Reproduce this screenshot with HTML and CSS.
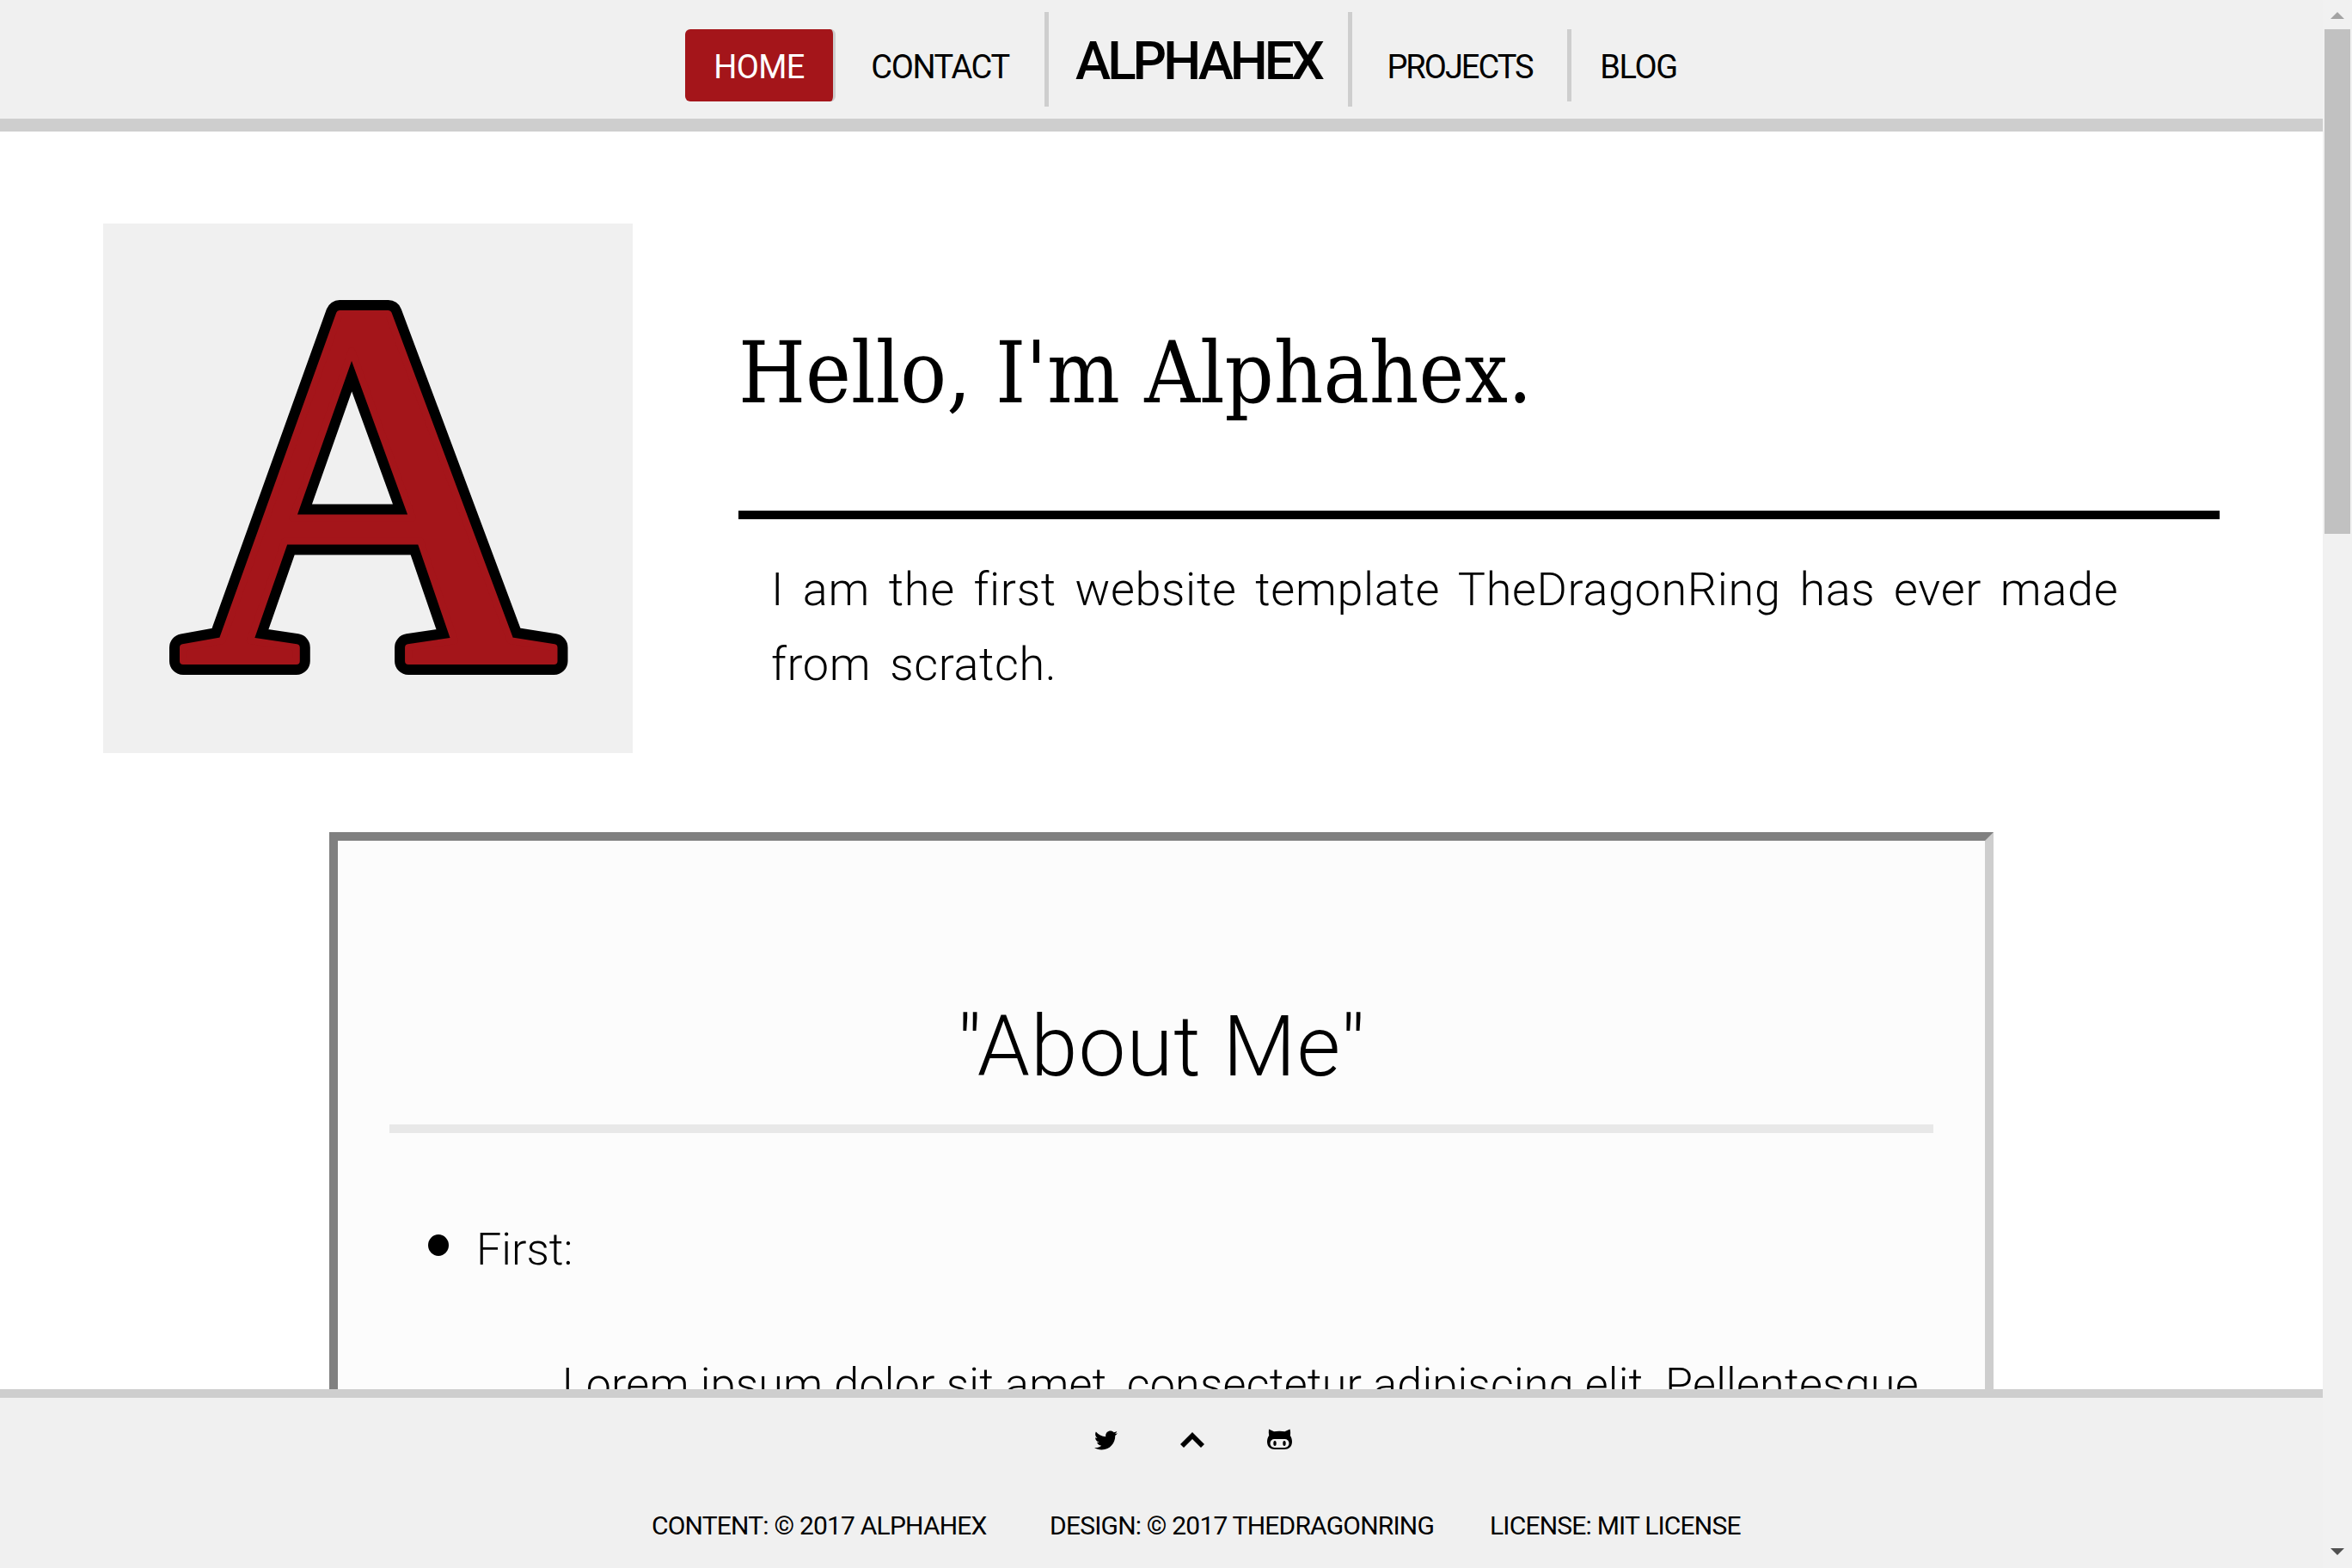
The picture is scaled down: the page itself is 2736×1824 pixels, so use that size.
FILE: index.html
```html
<!DOCTYPE html>
<HTML>

<HEAD>
    <title>Alphahex</title>
    <link rel="stylesheet" href="styles.css">
</HEAD>

<BODY>
    <DIV class="Window">
        <DIV class="Page">

            <DIV class="Header">
                <DIV class="Nav">
                    <A class="NavItem NavHome">HOME</A>
                    <A class="NavItem NavContact">CONTACT</A>
                    <A class="NavLogo">ALPHAHEX</A>
                    <A class="NavItem NavProjects">PROJECTS</A>
                    <A class="NavItem NavBlog">BLOG</A>
                </DIV>
            </DIV>

            <DIV class="Main">
                <DIV class="Hero">
                    <DIV class="Logo">
                        <svg class="LogoArt" viewBox="0 0 616 616" width="616" height="616">
                            <defs>
                                <text id="logoLetter" class="LogoLetter" x="308" y="509" text-anchor="middle">A</text>
                            </defs>
                            <use class="LogoOutline" href="#logoLetter"></use>
                            <use class="LogoFill" href="#logoLetter"></use>
                        </svg>
                    </DIV>
                    <DIV class="Intro">
                        <H1 class="Hello">Hello, I'm Alphahex.</H1>
                        <P class="Tagline">I am the first website template TheDragonRing has ever made from scratch.</P>
                    </DIV>
                </DIV>

                <DIV class="Card">
                    <H2 class="CardTitle">"About Me"</H2>
                    <DIV class="ListItem">
                        <SPAN class="Bullet"></SPAN>
                        <SPAN>First:</SPAN>
                    </DIV>
                    <P class="Lorem">Lorem ipsum dolor sit amet, consectetur adipiscing elit. Pellentesque habitant morbi tristique senectus.</P>
                </DIV>
            </DIV>

            <DIV class="Footer">
                <DIV class="Icons">
                    <svg class="IconTwitter" viewBox="0 0 512 512" width="27" height="27">
                        <path d="M459.37 151.716c.325 4.548.325 9.097.325 13.645 0 138.72-105.583 298.558-298.558 298.558-59.452 0-114.68-17.219-161.137-47.106 8.447.974 16.568 1.299 25.34 1.299 49.055 0 94.213-16.568 130.274-44.832-46.132-.975-84.792-31.188-98.112-72.772 6.498.974 12.995 1.624 19.818 1.624 9.421 0 18.843-1.3 27.614-3.573-48.081-9.747-84.143-51.98-84.143-102.985v-1.299c13.969 7.797 30.214 12.67 47.431 13.319-28.264-18.843-46.781-51.005-46.781-87.391 0-19.492 5.197-37.36 14.294-52.954 51.655 63.675 129.3 105.258 216.365 109.807-1.624-7.797-2.599-15.918-2.599-24.04 0-57.828 46.782-104.934 104.934-104.934 30.213 0 57.502 12.67 76.67 33.137 23.715-4.548 46.456-13.32 66.599-25.34-7.798 24.366-24.366 44.833-46.132 57.827 21.117-2.273 41.584-8.122 60.426-16.243-14.292 20.791-32.161 39.308-52.628 54.253z"/>
                    </svg>
                    <svg class="IconUp" viewBox="0 0 28 18" width="28" height="18">
                        <path d="M0 14L14 0L28 14L24 18L14 8L4 18Z"/>
                    </svg>
                    <svg class="IconGithub" viewBox="0 0 29 24" width="29" height="24">
                        <path d="M2 .5L8 3.2C11.5 2.5 17 2.5 20.5 3.2L26.5 .5C27.3 3 27.3 5.5 26.8 8C28.3 10 29 12.5 29 15C29 21 25 24 20 24H9C4 24 0 21 0 15C0 12.5 .7 10 2.2 8C1.7 5.5 1.7 3 2 .5Z"/>
                        <rect class="IconFace" x="3.5" y="12" width="22" height="10" rx="5"/>
                        <ellipse cx="9" cy="17" rx="1.7" ry="3"/>
                        <ellipse cx="20" cy="17" rx="1.7" ry="3"/>
                    </svg>
                </DIV>
                <DIV class="Credits">
                    <SPAN class="CreditContent">CONTENT: © 2017 ALPHAHEX</SPAN>
                    <SPAN class="CreditDesign">DESIGN: © 2017 THEDRAGONRING</SPAN>
                    <SPAN class="CreditLicense">LICENSE: MIT LICENSE</SPAN>
                </DIV>
            </DIV>

        </DIV>

        <DIV class="Scrollbar">
            <DIV class="ArrowUp"></DIV>
            <DIV class="Thumb"></DIV>
            <DIV class="ArrowDown"></DIV>
        </DIV>
    </DIV>
</BODY>

</HTML>
```

FILE: styles.css
```css
html,
body {
    margin: 0;
    height: 100%;
    overflow: hidden;
    background-color: #ffffff;
    color: #000000;
    font-family: "Roboto", "Liberation Sans", sans-serif;
}

.Window {
    display: flex;
    height: 1824px;
    overflow: hidden;
}

.Page {
    flex: 1;
    min-width: 0;
    display: flex;
    flex-direction: column;
}

/* header */

.Header {
    height: 138px;
    flex: none;
    background-color: #f0f0f0;
    border-bottom: 15px solid #cecece;
}

.Nav {
    display: flex;
    align-items: flex-start;
    padding-left: 797px;
    padding-top: 14px;
}

.NavItem {
    box-sizing: border-box;
    height: 84px;
    margin-top: 20px;
    line-height: 88px;
    font-size: 38px;
    letter-spacing: -1.4px;
    text-align: center;
}

.NavHome {
    width: 175px;
    background-color: #a4151a;
    color: #ffffff;
    border-radius: 6px;
    border-right: 3px solid #cecece;
    letter-spacing: -0.6px;
}

.NavContact {
    width: 243px;
}

.NavLogo {
    box-sizing: border-box;
    width: 358px;
    height: 110px;
    line-height: 114px;
    font-size: 62px;
    font-weight: 500;
    letter-spacing: -4px;
    text-align: center;
    border-left: 5px solid #cecece;
    border-right: 5px solid #cecece;
}

.NavProjects {
    width: 255px;
    border-right: 5px solid #cecece;
    letter-spacing: -2px;
}

.NavBlog {
    width: 156px;
}

/* main */

.Main {
    flex: 1;
    min-height: 0;
    overflow: hidden;
}

.Hero {
    display: flex;
    padding-top: 107px;
    padding-left: 120px;
}

.Logo {
    width: 616px;
    height: 616px;
    flex: none;
    background-color: #f0f0f0;
}

.LogoArt {
    display: block;
    overflow: visible;
}

.LogoLetter {
    font-family: "Liberation Serif", serif;
    font-size: 612px;
    stroke-linejoin: round;
}

.LogoOutline {
    fill: #000000;
    stroke: #000000;
    stroke-width: 32px;
}

.LogoFill {
    fill: #a4151a;
    stroke: #a4151a;
    stroke-width: 8px;
}

.Intro {
    width: 1723px;
    margin-left: 123px;
}

.Hello {
    margin: 114px 0 0 0;
    padding-bottom: 100px;
    border-bottom: 10px solid #000000;
    font-family: "DejaVu Serif Condensed", "DejaVu Serif", serif;
    font-weight: normal;
    font-size: 99.5px;
    line-height: 120px;
}

.Tagline {
    margin: 38px 0 0 0;
    padding: 0 60px 0 38px;
    font-weight: 300;
    font-size: 54px;
    line-height: 87px;
    letter-spacing: 0.65px;
    word-spacing: 8px;
}

.Card {
    box-sizing: border-box;
    width: 1936px;
    margin-top: 92px;
    margin-left: 383px;
    padding: 0 60px 80px 60px;
    background-color: #fcfcfc;
    border-style: solid;
    border-width: 10px;
    border-color: #808080 #cecece #cecece #808080;
    font-weight: 300;
    font-size: 52px;
    line-height: 80px;
}

.CardTitle {
    margin: 0;
    padding-top: 180px;
    padding-bottom: 30px;
    border-bottom: 10px solid #e8e8e8;
    font-weight: 300;
    font-size: 98px;
    line-height: 120px;
    letter-spacing: 1px;
    text-align: center;
}

.ListItem {
    display: flex;
    align-items: center;
    gap: 32px;
    margin-top: 96px;
    margin-left: 45px;
}

.Bullet {
    width: 24px;
    height: 25px;
    margin-top: -12px;
    background-color: #000000;
    border-radius: 50%;
}

.Lorem {
    margin: 77px 0 0 201px;
    letter-spacing: 0.23px;
}

/* footer */

.Footer {
    height: 198px;
    flex: none;
    background-color: #f0f0f0;
    border-top: 10px solid #cecece;
}

.Icons {
    display: flex;
    align-items: flex-start;
    padding-left: 1273px;
    padding-top: 36px;
}

.Icons svg {
    display: block;
}

.IconUp {
    margin-left: 73px;
    margin-top: 4px;
}

.IconGithub {
    margin-left: 73px;
}

.IconFace {
    fill: #f0f0f0;
}

.Credits {
    display: flex;
    padding-left: 758px;
    margin-top: 66px;
    font-size: 30px;
    line-height: 40px;
    letter-spacing: -0.8px;
    white-space: nowrap;
}

.CreditContent {
    width: 463px;
}

.CreditDesign {
    width: 512px;
}

/* scrollbar */

.Scrollbar {
    width: 34px;
    flex: none;
    display: flex;
    flex-direction: column;
    align-items: center;
    background-color: #f1f1f1;
}

.ArrowUp {
    width: 0;
    height: 0;
    margin-top: 14px;
    border-left: 8px solid transparent;
    border-right: 8px solid transparent;
    border-bottom: 8px solid #a3a3a3;
}

.Thumb {
    width: 30px;
    height: 587px;
    margin-top: 12px;
    background-color: #c1c1c1;
}

.ArrowDown {
    width: 0;
    height: 0;
    margin-top: auto;
    margin-bottom: 15px;
    border-left: 8px solid transparent;
    border-right: 8px solid transparent;
    border-top: 8px solid #505050;
}
```
